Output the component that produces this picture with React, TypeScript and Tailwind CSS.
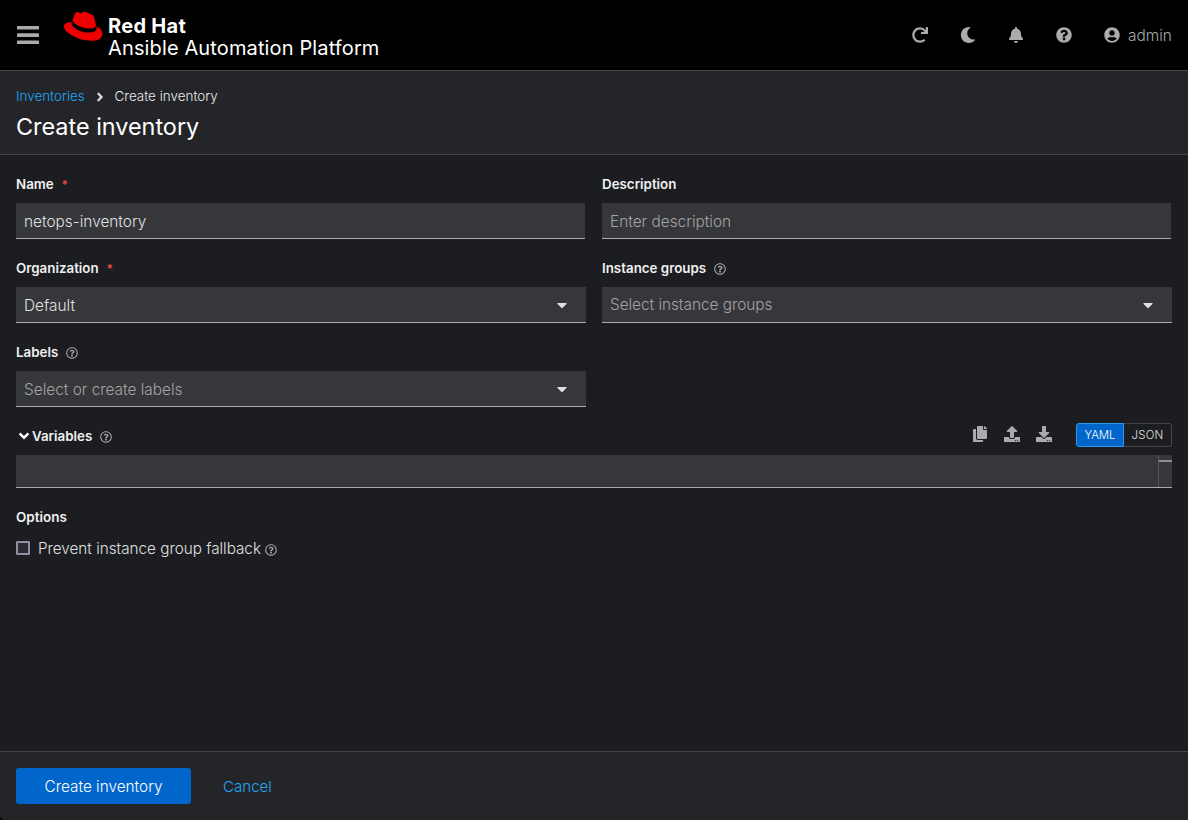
import type { ReactNode } from 'react';
import {
  FaAngleDown,
  FaAngleRight,
  FaBell,
  FaCaretDown,
  FaCopy,
  FaDownload,
  FaMoon,
  FaQuestionCircle,
  FaRedo,
  FaRegQuestionCircle,
  FaUpload,
  FaUserCircle,
} from 'react-icons/fa';
import { SiRedhat } from 'react-icons/si';

function Masthead() {
  return (
    <header className="flex h-[71px] shrink-0 items-center border-b border-[#444548] bg-black pl-[17px] pr-4">
      <button aria-label="Menu" className="text-[#aaabac]">
        <svg width="22" height="18" viewBox="0 0 22 18" fill="currentColor" className="block">
          <rect width="22" height="3.6" rx="0.7" />
          <rect y="7.3" width="22" height="3.6" rx="0.7" />
          <rect y="14.5" width="22" height="3.6" rx="0.7" />
        </svg>
      </button>
      <SiRedhat className="mb-[18px] ml-[25px] size-[38.5px] text-[#ee0000]" />
      <div className="ml-[5.5px] pt-[3px] text-[20px] leading-[22px] text-white">
        <div className="font-bold tracking-[0.3px]">Red Hat</div>
        <div className="tracking-[0.13px]">Ansible Automation Platform</div>
      </div>
      <div className="ml-auto flex items-center gap-8 text-[16px] text-[#aaabac]">
        <FaRedo />
        <FaMoon />
        <FaBell />
        <FaQuestionCircle />
        <div className="flex items-center gap-2">
          <FaUserCircle />
          <span className="h-6 w-11 pt-px text-[15.4px] font-light leading-6">admin</span>
        </div>
      </div>
    </header>
  );
}

function PageHeader() {
  return (
    <div className="h-[84px] shrink-0 border-b border-[#444548] bg-[#242528] px-4 pt-[15px]">
      <nav className="flex h-[21px] items-center text-[13.45px] font-light leading-[21px]">
        <a className="w-[69px] text-[#1fa7f8]">Inventories</a>
        <FaAngleRight className="mx-2 w-[14px] text-[14px] text-[#e0e0e0]" />
        <span className="-ml-[0.5px] text-[#e8e8e8]">Create inventory</span>
      </nav>
      <h1 className="mt-[4px] text-[23.4px] leading-[31px] text-white">Create inventory</h1>
    </div>
  );
}

function Help() {
  return <FaRegQuestionCircle className="shrink-0 text-[12px] text-[#a3a3a6]" />;
}

type FieldProps = { label: string; required?: boolean; help?: boolean; children: ReactNode };

function Field({ label, required, help, children }: FieldProps) {
  return (
    <div className="h-[84px]">
      <div className="flex h-7 items-start gap-2 leading-[18px]">
        <span className="text-[13.35px] font-semibold text-[#f0f0f0]">{label}</span>
        {required && <span className="pt-px text-[12px] text-[#fe5142]">*</span>}
        {help && (
          <span className="pt-[4px]">
            <Help />
          </span>
        )}
      </div>
      {children}
    </div>
  );
}

const controlBase =
  'flex h-9 items-center justify-between border-b border-[#aaabac] bg-[#36373a] pl-2 text-[15.4px] font-light';

function TextBox({ value, placeholder }: { value?: string; placeholder?: string }) {
  return (
    <div className={controlBase + ' mr-px'}>
      <input
        defaultValue={value}
        placeholder={placeholder}
        className="w-full bg-transparent pt-[3px] text-[#e0e0e0] outline-none placeholder:text-[#a3a3a3]"
      />
    </div>
  );
}

function Select({ text, tone }: { text: string; tone: string }) {
  return (
    <div className={controlBase + ' pr-4'}>
      <span className={tone}>{text}</span>
      <FaCaretDown className="text-[16px] text-[#e0e0e0]" />
    </div>
  );
}

function Variables() {
  return (
    <section>
      <div className="flex h-8 items-start">
        <div className="flex h-[26px] items-center pt-[2px]">
          <FaAngleDown className="mb-[3px] text-[16px] text-white" />
          <span className="mb-[2px] mr-2 text-[13.35px] font-semibold leading-5 text-[#f0f0f0]">Variables</span>
          <Help />
        </div>
        <div className="ml-auto flex items-center text-[#aaabac]">
          <div className="flex items-center gap-4 pb-[2px] text-[16px]">
            <FaCopy />
            <FaUpload />
            <FaDownload />
          </div>
          <div className="ml-6 flex h-6 text-[11.4px] font-light">
            <button className="w-12 rounded-l-[3px] border border-[#2b9af3] bg-[#0066cc] pt-[2px] text-white">YAML</button>
            <button className="w-12 rounded-r-[3px] border border-l-0 border-[#444548] pt-[2px] tracking-[0.3px] text-[#e0e0e0]">
              JSON
            </button>
          </div>
        </div>
      </div>
      <div className="flex h-[33px] justify-end border-b border-[#aaabac] bg-[#36373a]">
        <div className="w-[14px] border-l border-[#555658] pt-[5px]">
          <div className="h-[2px] bg-[#8f9092]" />
        </div>
      </div>
    </section>
  );
}

export default function App() {
  return (
    <div className="h-[820px] w-[1188px] bg-black font-['Inter',sans-serif]">
      <div className="flex h-full flex-col overflow-hidden rounded-bl-[5px] bg-[#1b1d21]">
        <Masthead />
        <PageHeader />
        <main className="flex-1 px-4 pt-5">
          <div className="grid grid-cols-2 gap-x-4">
            <Field label="Name" required>
              <TextBox value="netops-inventory" />
            </Field>
            <Field label="Description">
              <TextBox placeholder="Enter description" />
            </Field>
            <Field label="Organization" required>
              <Select text="Default" tone="pt-[2px] text-[#e0e0e0]" />
            </Field>
            <Field label="Instance groups" help>
              <Select text="Select instance groups" tone="text-[#a3a3a3] tracking-[-0.04px]" />
            </Field>
            <Field label="Labels" help>
              <Select text="Select or create labels" tone="pt-[2px] text-[#a3a3a3]" />
            </Field>
          </div>
          <div className="-mt-1">
            <Variables />
          </div>
          <div className="mt-5 text-[13.45px] font-semibold leading-[18px] text-[#f0f0f0]">Options</div>
          <div className="mt-[10px] flex h-6 items-center">
            <span className="size-[14px] rounded-[1px] border-2 border-[#8f8f9d] bg-[#2b2a33]" />
            <span className="ml-2 mr-1 w-[223px] whitespace-nowrap pt-[2px] text-[15.25px] font-light text-[#e0e0e0]">
              Prevent instance group fallback
            </span>
            <span className="pt-[3px]">
              <Help />
            </span>
          </div>
        </main>
        <footer className="flex h-[69px] shrink-0 items-start border-t border-[#444548] bg-[#242528] px-4 pt-4 text-[15.35px] font-light">
          <button className="h-9 w-[175px] rounded-[3px] bg-[#0066cc] pt-[2px] text-white">Create inventory</button>
          <button className="ml-8 h-9 pt-[2px] text-[15.1px] text-[#1fa7f8]">Cancel</button>
        </footer>
      </div>
    </div>
  );
}
